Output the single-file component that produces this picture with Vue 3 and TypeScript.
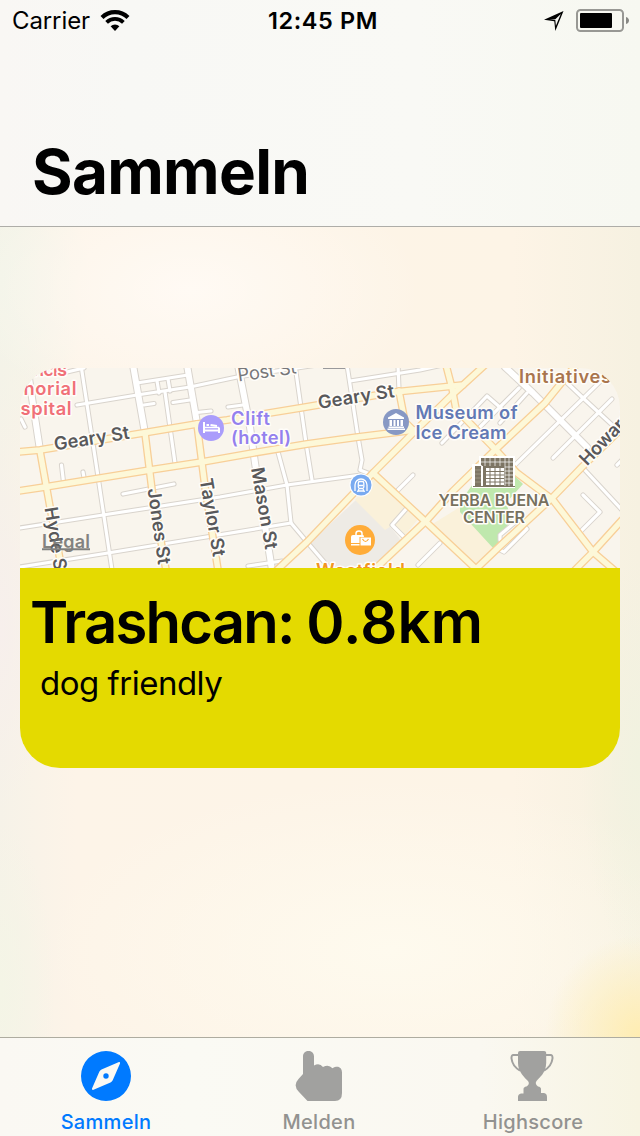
<script setup lang="ts">
interface Tab { id: string; label: string; active: boolean }

const tabs: Tab[] = [
  { id: 'collect', label: 'Sammeln', active: true },
  { id: 'report', label: 'Melden', active: false },
  { id: 'score', label: 'Highscore', active: false },
]

const areas = [
  { fill: '#eeebe5', d: 'M357 499L392 529L403 543L378 567L325 567L308 545Z' },
  { fill: '#faf1da', d: 'M355 500L374 476L419 518L404 536L393 525L385 530Z' },
  { fill: '#faf1da', d: 'M431 525L460 507L493 548L475 565Z' },
  { fill: '#bfe8ad', d: 'M473 484L460 502L460 512L493 548L499 542L502 532L512 520L506 503L523 484L510 471Z' },
]

const lanes = [
  'M67 372L84 368', 'M77 405L137 395L190 387L237 377L330 363',
  'M137 383L188 375', 'M157 381L159 393', 'M168 379L170 391', 'M165 392L175 463',
  'M144 405L154 403.5', 'M173 402.5L190 400', 'M197 412.5L211 411',
  'M61.5 465L63.5 482', 'M83 472L84.5 480', 'M123 494L174 484', 'M21 419L25 427',
  'M20 528L103 515L220 497L287 485L361 475', 'M20 567L108 553L200 538L291 523L307 542L331 570',
  'M278 452L287 485L291 523', 'M248 566L282 561', 'M228 407L243 405', 'M350 381L420 370L447 364',
  'M295 365L306 443L312 480', 'M347 365L358 437L362 460L360 470L370 474', 'M398 365L399 390',
  'M413 475L398 490', 'M407 508L392 525L404 537', 'M418 565L440 543', 'M81 365L97 470L112 570',
  'M442 443L487 396L510 416', 'M500 423L527 393', 'M480 427L519 388',
  'M515 465L612 370', 'M553 458L612 399', 'M564 380L583 398L622 434', 'M583 468L622 510',
  'M583 495L600 512L580 532', 'M500 540L500 535L519 519L527 529L504 552L498 549', 'M617 465L624 458',
]
const streets = [
  'M27 365L40 450', 'M133 365L145 433', 'M187 365L197 423', 'M238 365L250 427L255 463L272 570',
  'M505 367L533 393L548 408L587 447',
]
const avenues = [
  'M18 452L40 450L143 433L197 424L227 420L300 408L395 392L463 385L486 364',
  'M18 491L45 487L150 470L202 462L253 453L307 444L358 437L415 430',
  'M277 570L307 542L373 473L413 433L453 394L463 385',
  'M446 365L452 388L456 409L495 449L517 473L553 500L593 552L614 570',
  'M575 366L545 403L495 450L453 491L427 520L374 570',
  'M373 473L427 523L476 569L500 546L553 497L583 466L622 428',
  'M622 520L593 552L575 570', 'M399 391L405 422L415 432',
  'M40 451L50 507L62 570', 'M145 433L152 490L166 570', 'M197 424L205 487L218 570',
]
</script>

<template>
  <div class="screen">
    <header class="top">
      <div class="status">
        <div class="carrier">
          <span>Carrier</span>
          <svg class="wifi" width="30" height="22" viewBox="0 0 30 22">
            <g fill="none" stroke="#000">
              <path d="M2 7.5A18.5 18.5 0 0 1 28 7.5" stroke-width="4.2" />
              <path d="M6.6 12.3A12 12 0 0 1 23.4 12.3" stroke-width="3.8" />
            </g>
            <path d="M10.6 16.3A6.3 6.3 0 0 1 19.4 16.3L15 21Z" />
          </svg>
        </div>
        <time>12:45 PM</time>
        <div class="power">
          <svg width="20" height="22" viewBox="0 0 20 22">
            <path fill-rule="evenodd" d="M0 9.800L19.500 1L11.300 21L10.300 11.200ZM5.500 9.600L11.300 9.900L11.900 15.800L16.800 3.900L11.300 9.200Z" />
          </svg>
          <svg width="54" height="24" viewBox="0 0 54 24">
            <rect x="1" y="1" width="46" height="21" rx="3.5" fill="none" stroke="#989894" stroke-width="2" />
            <rect x="4" y="4" width="32" height="15" rx="1" />
            <path d="M50 8C54 9 54 14 50 15Z" fill="#888884" />
          </svg>
        </div>
      </div>
      <h1>Sammeln</h1>
    </header>

    <main>
      <article class="card">
        <svg class="map" width="600" height="200" viewBox="20 368 600 200">
          <rect x="20" y="368" width="600" height="200" fill="#f9f5ed" />
          <path v-for="a in areas" :key="a.d" :d="a.d" :fill="a.fill" />
          <g class="roads">
            <path v-for="d in lanes" :key="'a' + d" :d="d" class="lane edge" />
            <path v-for="d in streets" :key="'b' + d" :d="d" class="street edge" />
            <path v-for="d in lanes" :key="'c' + d" :d="d" class="lane" />
            <path v-for="d in streets" :key="'d' + d" :d="d" class="street" />
            <path v-for="d in avenues" :key="'e' + d" :d="d" class="avenue edge" />
            <path v-for="d in avenues" :key="'f' + d" :d="d" class="avenue" />
          </g>
          <path d="M323 368H345" stroke="#99999b" stroke-width="2" />

          <g class="labels">
            <g fill="#f07078">
              <text x="33" y="375.5" textLength="34">ncis</text>
              <text x="23.500" y="395" textLength="53">norial</text>
              <text x="20.500" y="415" textLength="51">spital</text>
            </g>
            <g fill="#9481ee">
              <text x="231" y="424.500" textLength="39">Clift</text>
              <text x="231" y="444" textLength="60">(hotel)</text>
            </g>
            <g fill="#6279b5">
              <text x="415.5" y="418.5" textLength="102">Museum of</text>
              <text x="415.5" y="438.5" textLength="91">Ice Cream</text>
            </g>
            <text x="519" y="383" textLength="92" fill="#a9754e">Initiatives</text>
            <text x="316" y="577" textLength="89" fill="#f29622">Westfield</text>
            <g fill="#77715f" class="place">
              <text x="438.5" y="506" textLength="111">YERBA BUENA</text>
              <text x="463" y="523" textLength="62">CENTER</text>
            </g>
            <g fill="#59595b">
              <text transform="translate(55 450.5) rotate(-9)" textLength="76">Geary St</text>
              <text transform="translate(319 409) rotate(-9)" textLength="77">Geary St</text>
              <text transform="translate(238.5 381.5) rotate(-8)" textLength="59" class="light">Post St</text>
              <text transform="translate(44.500 508) rotate(81)" textLength="70">Hyde St</text>
              <text transform="translate(147.500 489) rotate(82)" textLength="77">Jones St</text>
              <text transform="translate(199.500 479.500) rotate(80)" textLength="79">Taylor St</text>
              <text transform="translate(251 468.500) rotate(80)" textLength="83">Mason St</text>
              <text transform="translate(587 466.500) rotate(-46)" textLength="67">Howard</text>
            </g>
          </g>
          <g class="legal">
            <text x="42" y="547.5" textLength="48">Legal</text>
            <path d="M42 549.3H90" stroke="#80807e" stroke-width="2" />
          </g>

          <circle cx="211" cy="428" r="13" fill="#aa9dfb" />
          <g fill="none" stroke="#fff">
            <path d="M204 422V433M204 430.5H219V433M219 427.5V431" stroke-width="2" />
            <path d="M205 427.5H219" stroke-width="1.5" />
            <path d="M206.500 425H209M210.500 425L217 426" stroke-width="2" />
          </g>

          <circle cx="396" cy="422" r="13" fill="#8798c4" />
          <g fill="#fff">
            <path d="M388 417.500L396 413L404 417.500V419H388Z" />
            <path d="M389.500 420H392V426H389.500ZM393.500 420H395.500V426H393.500ZM397 420H399V426H397ZM400.500 420H403V426H400.500ZM388.500 426.500H404V428H388.500ZM387.500 428.500H405V430H387.500Z" />
          </g>

          <circle cx="361" cy="485" r="11.500" fill="#fff" />
          <circle cx="361" cy="485" r="10.500" fill="#79aaf0" />
          <g fill="none" stroke="#fff" stroke-width="1.300">
            <path d="M355 491V485A6 6 0 0 1 367 485V491" />
            <rect x="358.300" y="481.500" width="5.500" height="7" rx="1.500" />
            <path d="M359 485.500H363M359 489L357.500 492M363 489L364.500 492M358 491H364" />
          </g>

          <circle cx="360" cy="540" r="15" fill="#ffac38" />
          <path d="M356 536V533.500Q356 531 359 531Q362 531 362 533.500V536" fill="none" stroke="#fff" stroke-width="1.500" />
          <path d="M351 537Q351 535 353 535H363Q364 535 364 537H359.500V543H351ZM351 544H359.500V545.500H351Z" fill="#fff" />
          <path d="M360.500 537.500H371V545.500H360.500Z" fill="#fff" />
          <path d="M362.500 539Q365.500 544 368.500 539" fill="none" stroke="#ffac38" stroke-width="1.200" />

          <g>
            <path d="M473 487V465H480V457H514V487Z" fill="#fff" stroke="#fff" stroke-width="2" />
            <path d="M475 466H481V486H475ZM481 458H513V486H505V466H481ZM483 466H505V486H483ZM473 486H515V487H473Z" fill="#7d7564" />
            <path d="M486 468H504V485H486Z" fill="#fff" />
            <path d="M486 471.500H504M486 475H504M486 478.500H504M486 482H504M490 468V485M495 468V485M500 468V485" stroke="#7d7564" />
            <path d="M481 462H513M485 458V466M490 458V466M495 458V466M500 458V466M505 458V486M509 458V486M505 467H513M505 471H513M505 475H513M505 479H513M505 483H513M481.500 465V486" stroke="#fff" stroke-width=".7" />
            <path d="M475 470H481M475 474H481M475 478H481M475 482H481" stroke="#aaa491" stroke-width=".7" />
          </g>
        </svg>
        <div class="details">
          <h2><span class="kind">Trashcan:</span> <span class="distance">0.8km</span></h2>
          <p>dog friendly</p>
        </div>
      </article>
    </main>

    <nav>
      <a v-for="t in tabs" :key="t.id" :class="['tab', { active: t.active }]">
        <svg v-if="t.id === 'collect'" width="50" height="50" viewBox="0 0 50 50">
          <path fill="currentColor" fill-rule="evenodd" d="M25 0A25 25 0 1 1 25 50A25 25 0 1 1 25 0ZM38 11L20.500 18.500Q19 19.200 18.300 20.700L11 37.500Q10.800 39.500 12.500 38.800L29.500 31.500Q31 30.800 31.700 29.300L39 12.500Q39.500 10.700 38 11ZM25 22.300A2.700 2.700 0 1 1 25 27.700A2.700 2.700 0 1 1 25 22.300Z" />
        </svg>
        <svg v-else-if="t.id === 'report'" width="48" height="50" viewBox="0 0 48 50">
          <path fill="currentColor" d="M8 5.500C8 -1.800 19 -1.800 19 5.500V14.500Q24.500 11.500 28 16Q33.500 12.800 37.500 17.200C43 14 47 16.500 47 21.500V42Q47 50 40 50H12.500L4 41Q-2.500 34.500 3.500 28L8 23Z" />
        </svg>
        <svg v-else class="cup" width="44" height="50" viewBox="0 0 44 50">
          <path fill="currentColor" d="M10 0H34Q36.500 0 36.200 3V12C36 22 29 27 26.500 30C25 32 26 34 28 35.500Q31 36 31 38V42H34Q37 42.500 37 46V50H8V46Q8 43 11 42.500H13.500V38Q13.500 36 16.500 35.500C19 34 19.500 32 18 30C15 27 8 21 8 12V2Q8 0 10 0Z" />
          <path d="M8.500 4H3.500Q1.200 4 1.500 7.500Q2.500 15.500 10 19.500M35.800 4H40.500Q42.800 4 42.500 7.500Q41.500 15.500 34 19.500" fill="none" stroke="currentColor" stroke-width="2" />
        </svg>
        <span>{{ t.label }}</span>
      </a>
    </nav>
  </div>
</template>

<style>
body { margin: 0; }
</style>

<style scoped>
.screen {
  width: 640px;
  height: 1136px;
  display: flex;
  flex-direction: column;
  overflow: hidden;
  font-family: Inter, "Liberation Sans", sans-serif;
  color: #000;
  background:
    radial-gradient(ellipse 95px 100px at 640px 1035px, #ffedb2, transparent),
    radial-gradient(ellipse 230px 130px at 190px 290px, #fffaf4, transparent),
    radial-gradient(ellipse 90px 180px at 0 280px, #f2f4e8, transparent),
    radial-gradient(ellipse 50px 180px at 0 630px, #f7efec, transparent),
    radial-gradient(ellipse 60px 200px at 640px 760px, #f1f2e0, transparent),
    radial-gradient(ellipse 55px 170px at 0 990px, #f4f5e6, transparent),
    radial-gradient(ellipse 350px 170px at 390px 950px, #fefaee, transparent),
    linear-gradient(90deg, #f6f2e8, #fdf4e8 12%, #fdf4e6 80%, #f6f1e1);
}
.top {
  box-sizing: border-box;
  height: 227px;
  flex: none;
  border-bottom: 1px solid #aeada8;
  background: linear-gradient(90deg, #f9f7f4, #f8f8f5 20%, #f9f9f5 65%, #f7f8f1);
}
.status {
  height: 40px;
  display: grid;
  grid-template-columns: 1fr auto 1fr;
  align-items: center;
  padding: 1px 10px 0 12px;
  font-size: 24px;
  line-height: 40px;
}
.carrier { display: flex; align-items: center; gap: 10px; }
.carrier span { letter-spacing: -0.1px; }
.wifi { display: block; margin-top: -1px; }
time { font-size: 23.5px; font-weight: 600; letter-spacing: 0.6px; padding-left: 4px; }
.power { display: flex; justify-content: flex-end; align-items: center; gap: 12px; }
h1 {
  margin: 91px 0 0 32px;
  font-size: 62px;
  line-height: 80px;
  font-weight: 700;
  letter-spacing: -0.7px;
}
main { height: 810px; flex: none; padding: 141px 20px 0; box-sizing: border-box; }
.card { height: 400px; border-radius: 40px; overflow: hidden; }
.map { display: block; }
.roads path { fill: none; stroke-linejoin: round; stroke-linecap: round; }
.lane { stroke: #fff; stroke-width: 3.2; }
.lane.edge { stroke: #d9d4cd; stroke-width: 5.2; }
.street { stroke: #fff; stroke-width: 6; }
.street.edge { stroke: #d9d4cd; stroke-width: 8; }
.avenue { stroke: #fdf8d8; stroke-width: 5.4; }
.avenue.edge { stroke: #f8cf98; stroke-width: 8; }
.labels text {
  font-size: 18.3px;
  font-weight: 600;
  paint-order: stroke;
  stroke: #fffdf9;
  stroke-width: 3px;
  stroke-linejoin: round;
}
.labels .place text { font-size: 16px; }
.labels .light { font-weight: 400; fill: #77777a; }
.legal text { font-size: 18px; font-weight: 600; fill: #6f6f6d; opacity: 0.85; }
.details {
  height: 200px;
  box-sizing: border-box;
  background: #e4da00;
  padding: 14px 10px 0;
}
h2 { margin: 0; font-size: 58px; line-height: 80px; font-weight: 600; letter-spacing: -2px; white-space: nowrap; }
.kind { letter-spacing: -1.8px; }
.distance { letter-spacing: 0.2px; }
p { margin: 1px 0 0 10px; font-size: 33px; line-height: 40px; letter-spacing: -0.5px; }
nav {
  box-sizing: border-box;
  height: 99px;
  flex: none;
  display: grid;
  grid-template-columns: 212px 214px 214px;
  border-top: 1px solid #aeaca0;
  background: linear-gradient(90deg, #faf8f3, #fafaf4 30%, #faf8f1 75%, #f7f4e2);
}
.tab { display: flex; flex-direction: column; align-items: center; padding-top: 13px; color: #a1a19f; }
.tab svg { display: block; }
.tab .cup { margin-right: 2px; }
.tab span { margin-top: 6px; font-size: 20px; line-height: 30px; font-weight: 500; letter-spacing: 0.3px; color: #929290; }
.tab.active, .tab.active span { color: #007aff; }
</style>
